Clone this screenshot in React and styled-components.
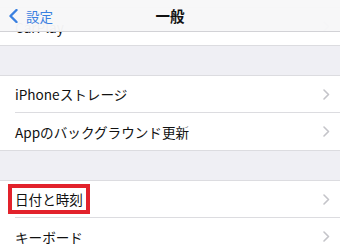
import React from 'react'
import styled, { createGlobalStyle } from 'styled-components'

const GlobalStyle = createGlobalStyle`
  html, body {
    margin: 0;
    padding: 0;
    background: #efeff4;
  }
  body {
    font-family: "Noto Sans CJK JP", "Noto Sans", sans-serif;
    -webkit-font-smoothing: antialiased;
  }
`

const Screen = styled.div`
  position: relative;
  width: 340px;
  height: 248px;
  overflow: hidden;
  background: #efeff4;
`

const NavBar = styled.div`
  position: absolute;
  top: 0;
  left: 0;
  right: 0;
  z-index: 2;
  height: 31px;
  display: grid;
  grid-template-columns: 1fr auto 1fr;
  align-items: center;
  background: rgba(247, 247, 248, 0.97);
  border-bottom: 1px solid #d2d2d6;
`

const BackButton = styled.div`
  display: flex;
  align-items: center;
  gap: 8px;
  padding-left: 9px;
  color: #3a80e0;
  font-size: 13.5px;
  line-height: 16px;
`

const NavTitle = styled.div`
  font-size: 14.5px;
  font-weight: 600;
  color: #111;
  line-height: 16px;
`

const List = styled.div`
  padding-top: 7px;
  display: flex;
  flex-direction: column;
  gap: 29px;
`

const Group = styled.div`
  background: #fff;
  border-top: 1px solid #dcdce0;
  border-bottom: 1px solid #dcdce0;
`

const Row = styled.div`
  padding-left: 15px;
  background: #fff;

  &:not(:last-child) > div {
    border-bottom: 1px solid #dcdce0;
  }
`

const RowBody = styled.div`
  box-sizing: border-box;
  height: 37px;
  display: flex;
  align-items: center;
  justify-content: space-between;
  padding-right: 10px;
`

const Label = styled.span`
  display: inline-block;
  font-size: 13.6px;
  line-height: 16px;
  color: #111;
  ${p =>
    p.highlight &&
    `
    outline: 4px solid #e2222b;
    outline-offset: 3px;
  `}
`

const Chevron = () => (
  <svg width="7" height="11" viewBox="0 0 7 11">
    <polyline
      points="1,1 5.5,5.5 1,10"
      fill="none"
      stroke="#c4c4c9"
      strokeWidth="1.6"
      strokeLinecap="round"
      strokeLinejoin="round"
    />
  </svg>
)

const BackChevron = () => (
  <svg width="9" height="14" viewBox="0 0 9 14">
    <polyline
      points="7.5,1 1.5,7 7.5,13"
      fill="none"
      stroke="#3a80e0"
      strokeWidth="2.4"
      strokeLinecap="round"
      strokeLinejoin="round"
    />
  </svg>
)

const groups = [
  [{ label: 'CarPlay' }],
  [{ label: 'iPhoneストレージ' }, { label: 'Appのバックグラウンド更新' }],
  [{ label: '日付と時刻', highlight: true }, { label: 'キーボード' }],
]

export default function App() {
  return (
    <>
      <GlobalStyle />
      <Screen>
        <NavBar>
          <BackButton>
            <BackChevron />
            <span>設定</span>
          </BackButton>
          <NavTitle>一般</NavTitle>
          <div />
        </NavBar>
        <List>
          {groups.map((rows, gi) => (
            <Group key={gi}>
              {rows.map((row, ri) => (
                <Row key={ri}>
                  <RowBody>
                    <Label highlight={row.highlight}>{row.label}</Label>
                    <Chevron />
                  </RowBody>
                </Row>
              ))}
            </Group>
          ))}
        </List>
      </Screen>
    </>
  )
}
